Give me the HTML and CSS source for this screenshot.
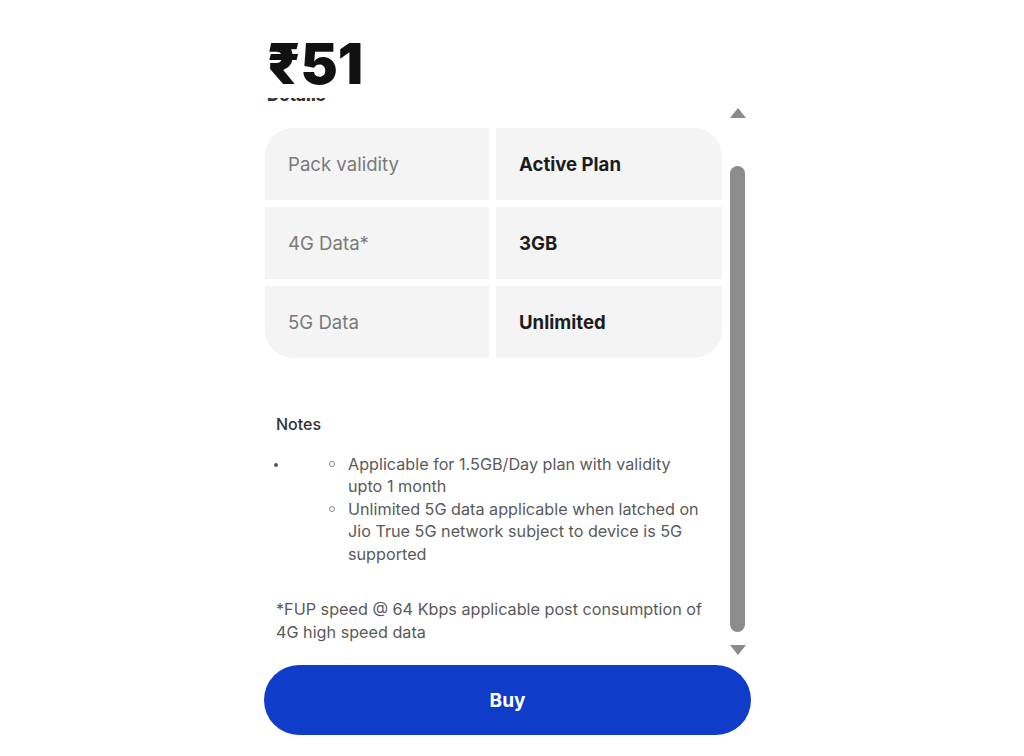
FILE: index.html
```html
<!DOCTYPE html>
<html lang="en">
<head>
<meta charset="utf-8">
<title>Plan details</title>
<link rel="stylesheet" href="styles.css">
</head>
<body>
<div class="sheet">
  <div class="price">₹51</div>
  <div class="body-row">
    <div class="viewport">
      <h3 class="details-title">Details</h3>
      <div class="table">
        <div class="cell label">Pack validity</div>
        <div class="cell value">Active Plan</div>
        <div class="cell label">4G Data*</div>
        <div class="cell value">3GB</div>
        <div class="cell label">5G Data</div>
        <div class="cell value">Unlimited</div>
      </div>
      <div class="notes">
        <div class="notes-title">Notes</div>
        <ul class="outer">
          <li>
            <ul class="inner">
              <li>Applicable for 1.5GB/Day plan with validity upto 1 month</li>
              <li>Unlimited 5G data applicable when latched on Jio True 5G network subject to device is 5G supported</li>
            </ul>
          </li>
        </ul>
        <p class="fup">*FUP speed @ 64 Kbps applicable post consumption of 4G high speed data</p>
      </div>
    </div>
    <div class="scrollbar">
      <div class="arrow up"></div>
      <div class="thumb"></div>
      <div class="arrow down"></div>
    </div>
  </div>
  <button class="buy">Buy</button>
</div>
</body>
</html>
```
FILE: styles.css
```css
html, body {
  margin: 0;
  padding: 0;
  background: #ffffff;
}
body {
  font-family: Inter, "Liberation Sans", Arial, sans-serif;
  color: #222;
}
.sheet {
  margin-left: 264px;
  width: 488px;
  display: flex;
  flex-direction: column;
}
.price {
  margin-top: 36px;
  height: 62px;
  font-size: 56px;
  line-height: 56px;
  font-weight: 900;
  color: #111;
  letter-spacing: 0;
  padding-left: 3px;
}
.body-row {
  display: flex;
  height: 562px;
}
.viewport {
  width: 465px;
  overflow: hidden;
  padding-left: 1px;
  box-sizing: border-box;
}
.details-title {
  margin: -13px 0 0 2px;
  font-size: 17px;
  line-height: 20px;
  font-weight: 800;
  color: #333;
  height: 20px;
}
.table {
  margin-top: 23px;
  width: 457px;
  display: grid;
  grid-template-columns: 224px 226px;
  grid-auto-rows: 72px;
  column-gap: 7px;
  row-gap: 7px;
  border-radius: 28px;
  overflow: hidden;
}
.cell {
  background: #f4f4f4;
  display: flex;
  align-items: center;
  padding-left: 23px;
  font-size: 18.6px;
}
.label {
  color: #7a7a7a;
}
.value {
  color: #1c1c1c;
  font-weight: 700;
}
.notes {
  padding-left: 11px;
  width: 432px;
  margin-top: 55px;
  font-size: 16.2px;
  line-height: 22.5px;
  color: #5a5a5a;
}
.notes-title {
  color: #333;
  font-weight: 500;
  font-size: 16px;
}
.outer {
  margin: 17px 0 0 0;
  padding: 0;
  list-style: none;
}
.outer > li {
  position: relative;
  padding-left: 72px;
}
.outer > li::before {
  content: "";
  position: absolute;
  left: -2px;
  top: 10px;
  width: 4px;
  height: 4px;
  border-radius: 50%;
  background: #555;
}
.inner {
  margin: 0;
  padding: 0;
  list-style: none;
}
.inner li {
  position: relative;
}
.inner li::before {
  content: "";
  position: absolute;
  left: -19px;
  top: 8px;
  width: 4px;
  height: 4px;
  border: 1px solid #888;
  border-radius: 50%;
}
.fup {
  margin: 33px 0 0 0;
}
.scrollbar {
  width: 17px;
  display: flex;
  flex-direction: column;
  align-items: center;
}
.arrow {
  width: 0;
  height: 0;
  border-left: 8px solid transparent;
  border-right: 8px solid transparent;
}
.arrow.up {
  margin-top: 10px;
  border-bottom: 10px solid #8a8a8a;
}
.arrow.down {
  margin-top: 13px;
  border-top: 10px solid #8a8a8a;
}
.thumb {
  margin-top: 48px;
  width: 15px;
  height: 466px;
  border-radius: 8px;
  background: #8c8c8c;
}
.buy {
  margin-top: 5px;
  width: 487px;
  height: 70px;
  border: none;
  border-radius: 35px;
  background: #0f3cc9;
  color: #ffffff;
  font-family: Inter, "Liberation Sans", Arial, sans-serif;
  font-size: 19px;
  font-weight: 700;
  cursor: pointer;
}
```
